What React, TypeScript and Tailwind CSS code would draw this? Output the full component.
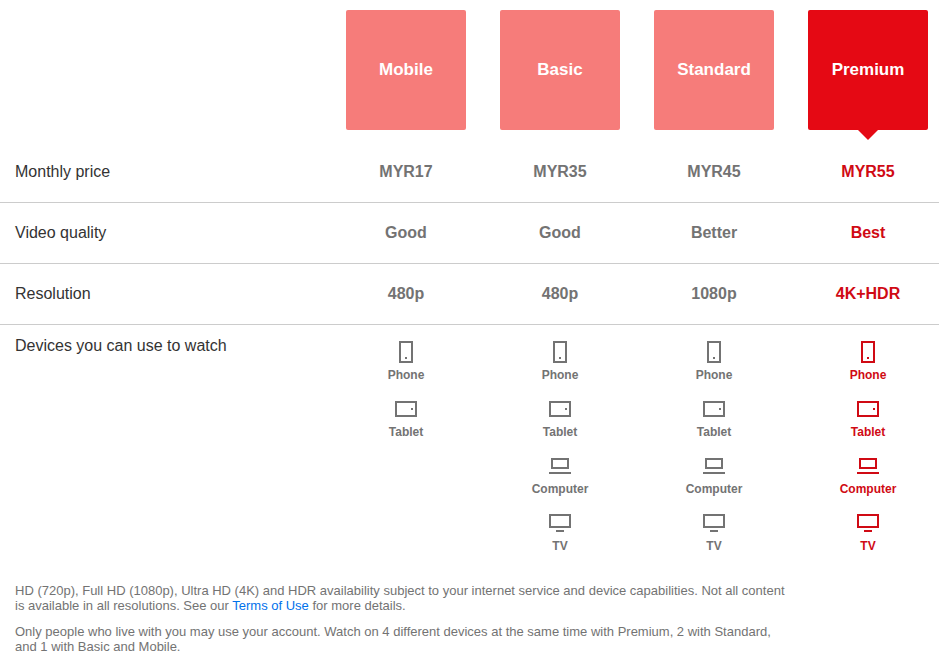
import React from 'react';

const plans = [
  { name: 'Mobile', price: 'MYR17', quality: 'Good', res: '480p', devices: ['Phone', 'Tablet'] },
  { name: 'Basic', price: 'MYR35', quality: 'Good', res: '480p', devices: ['Phone', 'Tablet', 'Computer', 'TV'] },
  { name: 'Standard', price: 'MYR45', quality: 'Better', res: '1080p', devices: ['Phone', 'Tablet', 'Computer', 'TV'] },
  { name: 'Premium', price: 'MYR55', quality: 'Best', res: '4K+HDR', devices: ['Phone', 'Tablet', 'Computer', 'TV'], selected: true },
];

function DeviceIcon({ name }: { name: string }) {
  return (
    <svg width="24" height="24" viewBox="0 0 24 24" fill="none" stroke="currentColor" strokeWidth="2">
      {name === 'Phone' && (<><rect x="6" y="2" width="12" height="20" /><rect x="11.5" y="17.5" width="1" height="1" fill="currentColor" strokeWidth="1" /></>)}
      {name === 'Tablet' && (<><rect x="2" y="5" width="20" height="14" /><rect x="17.5" y="11.5" width="1" height="1" fill="currentColor" strokeWidth="1" /></>)}
      {name === 'Computer' && (<><rect x="4" y="5" width="16" height="9" /><path d="M1 19h22" /></>)}
      {name === 'TV' && (<><rect x="2" y="4" width="20" height="12" /><path d="M8 20h8" /></>)}
    </svg>
  );
}

function Row({ label, k }: { label: string; k: 'price' | 'quality' | 'res' }) {
  return (
    <div className="flex h-[61px] items-center border-b border-[#cccccc]">
      <div className="flex-1 pl-[15px] text-[16px] text-[#333333]">{label}</div>
      {plans.map((p) => (
        <div key={p.name} className={`w-[154px] shrink-0 text-center text-[16px] font-bold ${p.selected ? 'text-[#d00a14]' : 'text-[#737373]'}`}>
          {p[k]}
        </div>
      ))}
    </div>
  );
}

export default function App() {
  return (
    <div className="h-[663px] w-[939px] overflow-hidden bg-white font-['Liberation_Sans',Arial,sans-serif]">
      <div className="ml-[346px] flex gap-[34px] pt-[10px]">
        {plans.map((p) => (
          <div key={p.name} className={`relative flex h-[120px] w-[120px] items-center justify-center rounded-[2px] text-[17px] font-bold text-white ${p.selected ? 'bg-[#e50914]' : 'bg-[#f67c7a]'}`}>
            {p.name}
            {p.selected && <div className="absolute left-1/2 top-full -translate-x-1/2 border-x-[10px] border-t-[10px] border-x-transparent border-t-[#e50914]" />}
          </div>
        ))}
      </div>
      <div className="mr-[-6px] mt-[12px]">
        <Row label="Monthly price" k="price" />
        <Row label="Video quality" k="quality" />
        <Row label="Resolution" k="res" />
      </div>
      <div className="mr-[-6px] flex pt-[15px]">
        <div className="mt-[-3px] flex-1 pl-[15px] text-[16px] leading-[18px] text-[#333333]">Devices you can use to watch</div>
        {plans.map((p) => (
          <div key={p.name} className={`flex w-[154px] shrink-0 flex-col items-center ${p.selected ? 'text-[#d00a14]' : 'text-[#737373]'}`}>
            {p.devices.map((d) => (
              <div key={d} className="flex h-[57px] flex-col items-center text-[12px] font-bold">
                <DeviceIcon name={d} />
                <span className="mt-[4px] leading-[14px]">{d}</span>
              </div>
            ))}
          </div>
        ))}
      </div>
      <div className="w-[800px] px-[15px] text-[13px] leading-[15px] text-[#737373]">
        <p className="mt-[15px]">HD (720p), Full HD (1080p), Ultra HD (4K) and HDR availability subject to your internet service and device capabilities. Not all content is available in all resolutions. See our <a className="text-[#0071eb]">Terms of Use</a> for more details.</p>
        <p className="mt-[11px]">Only people who live with you may use your account. Watch on 4 different devices at the same time with Premium, 2 with Standard, and 1 with Basic and Mobile.</p>
      </div>
    </div>
  );
}
